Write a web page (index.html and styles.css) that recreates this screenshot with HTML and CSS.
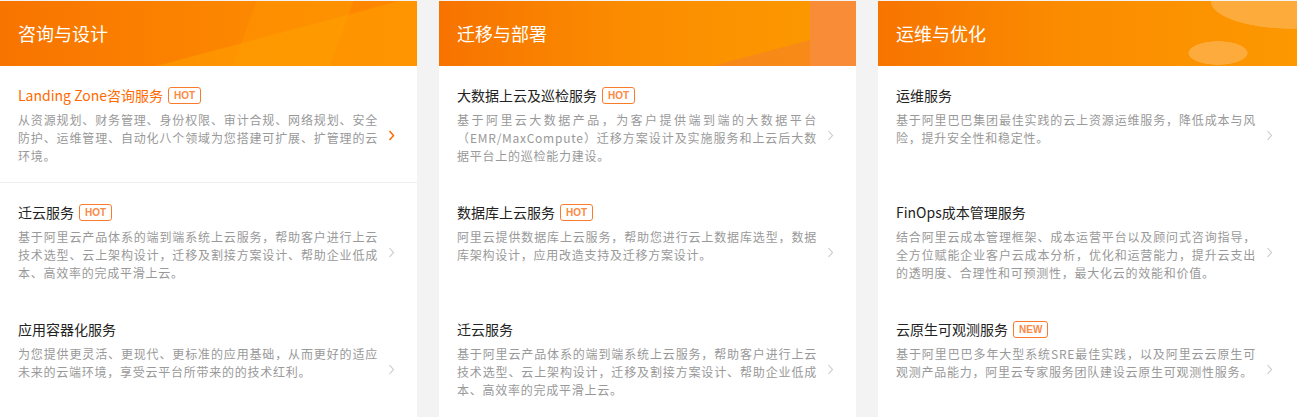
FILE: index.html
```html
<!DOCTYPE html>
<html lang="zh-CN">
<head>
    <meta charset="UTF-8">
    <meta name="viewport" content="width=device-width, initial-scale=1.0">
    <title>服务分类</title>
    <link rel="stylesheet" href="styles.css">
</head>
<body>
    <div class="service-grid">
        <!-- 咨询与设计 -->
        <section class="service-col">
            <div class="col-head head-consult">咨询与设计</div>
            <a class="service-item active" href="#">
                <div class="item-body">
                    <h3 class="item-title">Landing Zone咨询服务<span class="tag">HOT</span></h3>
                    <p class="item-desc">从资源规划、财务管理、身份权限、审计合规、网络规划、安全防护、运维管理、自动化八个领域为您搭建可扩展、扩管理的云环境。</p>
                </div>
                <svg class="arrow" width="7" height="11" viewBox="0 0 7 11"><path d="M1.5 1l4 4.5-4 4.5" fill="none" stroke="currentColor" stroke-width="1.5"/></svg>
            </a>
            <a class="service-item" href="#">
                <div class="item-body">
                    <h3 class="item-title">迁云服务<span class="tag">HOT</span></h3>
                    <p class="item-desc">基于阿里云产品体系的端到端系统上云服务，帮助客户进行上云技术选型、云上架构设计，迁移及割接方案设计、帮助企业低成本、高效率的完成平滑上云。</p>
                </div>
                <svg class="arrow" width="7" height="11" viewBox="0 0 7 11"><path d="M1.5 1l4 4.5-4 4.5" fill="none" stroke="currentColor" stroke-width="1.1"/></svg>
            </a>
            <a class="service-item" href="#">
                <div class="item-body">
                    <h3 class="item-title">应用容器化服务</h3>
                    <p class="item-desc">为您提供更灵活、更现代、更标准的应用基础，从而更好的适应未来的云端环境，享受云平台所带来的的技术红利。</p>
                </div>
                <svg class="arrow" width="7" height="11" viewBox="0 0 7 11"><path d="M1.5 1l4 4.5-4 4.5" fill="none" stroke="currentColor" stroke-width="1.1"/></svg>
            </a>
        </section>

        <!-- 迁移与部署 -->
        <section class="service-col">
            <div class="col-head head-migrate">迁移与部署</div>
            <a class="service-item" href="#">
                <div class="item-body">
                    <h3 class="item-title">大数据上云及巡检服务<span class="tag">HOT</span></h3>
                    <p class="item-desc">基于阿里云大数据产品，为客户提供端到端的大数据平台（EMR/MaxCompute）迁移方案设计及实施服务和上云后大数据平台上的巡检能力建设。</p>
                </div>
                <svg class="arrow" width="7" height="11" viewBox="0 0 7 11"><path d="M1.5 1l4 4.5-4 4.5" fill="none" stroke="currentColor" stroke-width="1.1"/></svg>
            </a>
            <a class="service-item" href="#">
                <div class="item-body">
                    <h3 class="item-title">数据库上云服务<span class="tag">HOT</span></h3>
                    <p class="item-desc">阿里云提供数据库上云服务，帮助您进行云上数据库选型，数据库架构设计，应用改造支持及迁移方案设计。</p>
                </div>
                <svg class="arrow" width="7" height="11" viewBox="0 0 7 11"><path d="M1.5 1l4 4.5-4 4.5" fill="none" stroke="currentColor" stroke-width="1.1"/></svg>
            </a>
            <a class="service-item" href="#">
                <div class="item-body">
                    <h3 class="item-title">迁云服务</h3>
                    <p class="item-desc">基于阿里云产品体系的端到端系统上云服务，帮助客户进行上云技术选型、云上架构设计，迁移及割接方案设计、帮助企业低成本、高效率的完成平滑上云。</p>
                </div>
                <svg class="arrow" width="7" height="11" viewBox="0 0 7 11"><path d="M1.5 1l4 4.5-4 4.5" fill="none" stroke="currentColor" stroke-width="1.1"/></svg>
            </a>
        </section>

        <!-- 运维与优化 -->
        <section class="service-col">
            <div class="col-head head-ops">运维与优化</div>
            <a class="service-item" href="#">
                <div class="item-body">
                    <h3 class="item-title">运维服务</h3>
                    <p class="item-desc">基于阿里巴巴集团最佳实践的云上资源运维服务，降低成本与风险，提升安全性和稳定性。</p>
                </div>
                <svg class="arrow" width="7" height="11" viewBox="0 0 7 11"><path d="M1.5 1l4 4.5-4 4.5" fill="none" stroke="currentColor" stroke-width="1.1"/></svg>
            </a>
            <a class="service-item" href="#">
                <div class="item-body">
                    <h3 class="item-title">FinOps成本管理服务</h3>
                    <p class="item-desc">结合阿里云成本管理框架、成本运营平台以及顾问式咨询指导，全方位赋能企业客户云成本分析，优化和运营能力，提升云支出的透明度、合理性和可预测性，最大化云的效能和价值。</p>
                </div>
                <svg class="arrow" width="7" height="11" viewBox="0 0 7 11"><path d="M1.5 1l4 4.5-4 4.5" fill="none" stroke="currentColor" stroke-width="1.1"/></svg>
            </a>
            <a class="service-item" href="#">
                <div class="item-body">
                    <h3 class="item-title">云原生可观测服务<span class="tag">NEW</span></h3>
                    <p class="item-desc">基于阿里巴巴多年大型系统SRE最佳实践，以及阿里云云原生可观测产品能力，阿里云专家服务团队建设云原生可观测性服务。</p>
                </div>
                <svg class="arrow" width="7" height="11" viewBox="0 0 7 11"><path d="M1.5 1l4 4.5-4 4.5" fill="none" stroke="currentColor" stroke-width="1.1"/></svg>
            </a>
        </section>
    </div>
</body>
</html>
```

FILE: styles.css
```css
/* General */
body {
    margin: 0;
    padding: 1px 0 0;
    background-color: #f3f3f3;
    font-family: "Noto Sans CJK SC", "Noto Sans", sans-serif;
    color: #333;
    overflow: hidden;
}

/* Three columns */
.service-grid {
    display: grid;
    grid-template-columns: 417px 417px 1fr;
    gap: 22px;
}

.service-col {
    background-color: #fff;
    padding-bottom: 40px;
}

/* Column header */
.col-head {
    height: 65px;
    line-height: 64px;
    padding-left: 18px;
    color: #fff;
    font-size: 18px;
    background-color: #fb8a00;
}

.head-consult {
    background-image:
        linear-gradient(165deg, transparent 60%, rgba(255, 160, 0, 0.55) 61%),
        linear-gradient(110deg, transparent 58%, rgba(255, 150, 0, 0.5) 58.5%, rgba(255, 150, 0, 0.5) 80%, rgba(255, 120, 0, 0.35) 80.5%),
        linear-gradient(90deg, #f87400 0%, #fc8600 55%, #fd9000 100%);
}

.head-migrate {
    background-image:
        linear-gradient(90deg, transparent 89%, rgba(248, 140, 55, 1) 89%),
        linear-gradient(165deg, transparent 78%, rgba(245, 130, 40, 0.6) 78.5%),
        linear-gradient(90deg, #f77300 0%, #fb8c00 45%, #fc9a00 100%);
}

.head-ops {
    background-image:
        radial-gradient(ellipse 82px 28px at 414px 0, rgba(253, 175, 70, 0.85) 98%, transparent 100%),
        radial-gradient(ellipse 30px 12px at 340px 52px, rgba(253, 175, 70, 0.85) 96%, transparent 100%),
        linear-gradient(90deg, #f77400 0%, #fb8c00 45%, #fc9800 100%);
}

/* Service items */
.service-item {
    display: flex;
    box-sizing: border-box;
    height: 117px;
    padding: 19px 0 0 18px;
    text-decoration: none;
    color: #c8c8c8;
}

.service-item.active {
    border-bottom: 1px solid #efefef;
    color: #ff6a00;
}

.item-body {
    width: 360px;
}

.item-title {
    margin: 0;
    display: flex;
    align-items: center;
    font-size: 14px;
    line-height: 20px;
    font-weight: normal;
    color: #222;
}

.active .item-title {
    color: #ff6a00;
}

.tag {
    margin-left: 5px;
    padding: 0 5px;
    height: 15px;
    line-height: 15px;
    border: 1px solid #fb7b2c;
    border-radius: 3px;
    font-size: 10px;
    font-weight: bold;
    font-family: "Liberation Sans", Arial, sans-serif;
    color: #fb8a45;
}

.item-desc {
    margin: 6px 0 0;
    font-size: 12px;
    line-height: 18px;
    letter-spacing: 0.75px;
    text-align: justify;
    color: #999;
}

.arrow {
    flex: none;
    margin: 45px 0 0 10px;
}
```
